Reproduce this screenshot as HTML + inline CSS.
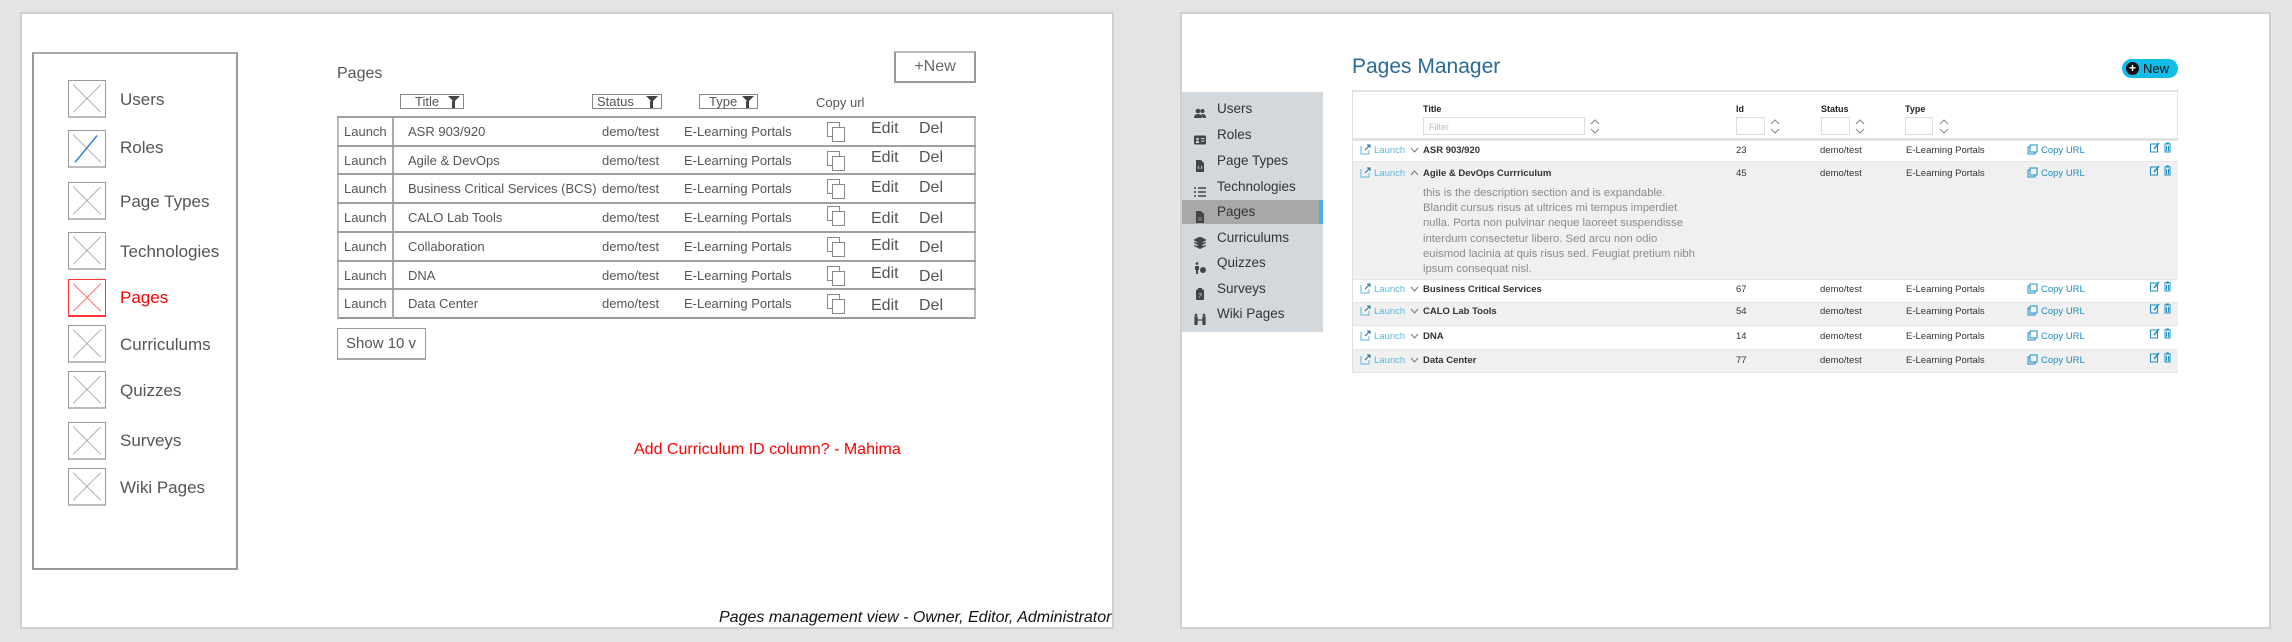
<!DOCTYPE html>
<html><head><meta charset="utf-8"><style>
*{margin:0;padding:0;box-sizing:border-box}
body{width:2292px;height:642px;background:#e4e4e4;position:relative;overflow:hidden;font-family:"Liberation Sans",sans-serif}
.a{position:absolute;white-space:nowrap}
.panel{position:absolute;background:#fff;border:2px solid #cfcfcf}
.xi{position:absolute;width:38px;height:38px;border:1px solid #999;border-bottom:2px solid #bbb}
.xi svg{width:100%;height:100%;display:block}
.lbl{position:absolute;font-size:17px;color:#555;transform:translateY(-50%)}
.lrow{position:absolute;left:337px;width:639px;height:29px;border-top:2px solid #a0a0a0;font-size:13px;color:#555}
.lrow span{position:absolute;top:6px}
.fb{position:absolute;top:94px;height:15px;border:1px solid #888;font-size:13px;color:#555;line-height:13px}
.rs{position:absolute;left:1182px;width:141px;height:26px;font-size:13.5px;color:#333;line-height:26px}
.rs i{position:absolute;left:12px;top:7px;width:12px;height:12px}
.rs b{position:absolute;left:35px;font-weight:normal}
.rr{position:absolute;left:1353px;width:825px;font-size:10px;color:#333;border-top:1px solid #e6e6e6}
.rr span{position:absolute}
.ln{color:#5ab7dc;left:21px}
.cu{color:#1d8cc0;left:688px}
</style></head><body>
<!-- LEFT PANEL -->
<div class="panel" style="left:20px;top:12px;width:1094px;height:617px"></div>
<div class="a" style="left:32px;top:52px;width:206px;height:518px;border:2px solid #999;border-top-color:#aaa"></div>

<div class="xi" style="left:68px;top:80px"><svg viewBox="0 0 38 38"><path d="M4 4L34 34M34 4L4 34" stroke="#aaa" stroke-width="1"/></svg></div>
<div class="xi" style="left:68px;top:130px"><svg viewBox="0 0 38 38"><path d="M4 4L34 34" stroke="#aaa"/><path d="M30 5L6 34" stroke="#2a72d8" stroke-width="1.5"/></svg></div>
<div class="xi" style="left:68px;top:182px"><svg viewBox="0 0 38 38"><path d="M4 4L34 34M34 4L4 34" stroke="#aaa"/></svg></div>
<div class="xi" style="left:68px;top:232px"><svg viewBox="0 0 38 38"><path d="M4 4L34 34M34 4L4 34" stroke="#aaa"/></svg></div>
<div class="xi" style="left:68px;top:279px;border-color:#f33"><svg viewBox="0 0 38 38"><path d="M4 4L34 34M34 4L4 34" stroke="#f66"/></svg></div>
<div class="xi" style="left:68px;top:325px"><svg viewBox="0 0 38 38"><path d="M4 4L34 34M34 4L4 34" stroke="#aaa"/></svg></div>
<div class="xi" style="left:68px;top:371px"><svg viewBox="0 0 38 38"><path d="M4 4L34 34M34 4L4 34" stroke="#aaa"/></svg></div>
<div class="xi" style="left:68px;top:422px"><svg viewBox="0 0 38 38"><path d="M4 4L34 34M34 4L4 34" stroke="#aaa"/></svg></div>
<div class="xi" style="left:68px;top:468px"><svg viewBox="0 0 38 38"><path d="M4 4L34 34M34 4L4 34" stroke="#aaa"/></svg></div>

<div class="lbl" style="left:120px;top:100px">Users</div>
<div class="lbl" style="left:120px;top:148px">Roles</div>
<div class="lbl" style="left:120px;top:202px">Page Types</div>
<div class="lbl" style="left:120px;top:252px">Technologies</div>
<div class="lbl" style="left:120px;top:298px;color:#f00">Pages</div>
<div class="lbl" style="left:120px;top:345px">Curriculums</div>
<div class="lbl" style="left:120px;top:391px">Quizzes</div>
<div class="lbl" style="left:120px;top:441px">Surveys</div>
<div class="lbl" style="left:120px;top:488px">Wiki Pages</div>

<div class="a" style="left:337px;top:65px;font-size:16px;color:#555">Pages</div>
<div class="a" style="left:894px;top:51px;width:82px;height:32px;border:2px solid #999;border-top-color:#bbb;font-size:16px;color:#666;text-align:center;line-height:28px">+New</div>

<div class="fb" style="left:400px;width:64px;padding-left:14px">Title<span style="position:absolute;right:3px;top:1px;width:0;height:0;border-left:6px solid transparent;border-right:6px solid transparent;border-top:6px solid #444"></span><span style="position:absolute;right:8px;top:6px;width:3px;height:7px;background:#444"></span></div>
<div class="fb" style="left:592px;width:70px;padding-left:4px">Status<span style="position:absolute;right:3px;top:1px;border-left:6px solid transparent;border-right:6px solid transparent;border-top:6px solid #444"></span><span style="position:absolute;right:8px;top:6px;width:3px;height:7px;background:#444"></span></div>
<div class="fb" style="left:699px;width:59px;padding-left:9px">Type<span style="position:absolute;right:3px;top:1px;border-left:6px solid transparent;border-right:6px solid transparent;border-top:6px solid #444"></span><span style="position:absolute;right:8px;top:6px;width:3px;height:7px;background:#444"></span></div>
<div class="a" style="left:816px;top:95px;font-size:13px;color:#555">Copy url</div>

<div class="a" style="left:337px;top:116px;width:639px;height:203px;border-left:2px solid #bbb;border-right:2px solid #bbb;border-bottom:2px solid #999"></div>
<div class="a" style="left:392px;top:116px;width:2px;height:203px;background:#aaa"></div>

<div class="lrow" style="top:116px"><span style="left:7px">Launch</span><span style="left:71px">ASR 903/920</span><span style="left:265px">demo/test</span><span style="left:347px">E-Learning Portals</span><span style="left:490px;top:4px;width:13px;height:15px;border:1px solid #888"></span><span style="left:495px;top:9px;width:13px;height:15px;border:1px solid #888;background:#fff"></span><span style="left:534px;top:2px;font-size:16px">Edit</span><span style="left:582px;top:2px;font-size:16px">Del</span></div>
<div class="lrow" style="top:145px"><span style="left:7px">Launch</span><span style="left:71px">Agile &amp; DevOps</span><span style="left:265px">demo/test</span><span style="left:347px">E-Learning Portals</span><span style="left:490px;top:4px;width:13px;height:15px;border:1px solid #888"></span><span style="left:495px;top:9px;width:13px;height:15px;border:1px solid #888;background:#fff"></span><span style="left:534px;top:2px;font-size:16px">Edit</span><span style="left:582px;top:2px;font-size:16px">Del</span></div>
<div class="lrow" style="top:173px"><span style="left:7px">Launch</span><span style="left:71px">Business Critical Services (BCS)</span><span style="left:265px">demo/test</span><span style="left:347px">E-Learning Portals</span><span style="left:490px;top:4px;width:13px;height:15px;border:1px solid #888"></span><span style="left:495px;top:9px;width:13px;height:15px;border:1px solid #888;background:#fff"></span><span style="left:534px;top:4px;font-size:16px">Edit</span><span style="left:582px;top:4px;font-size:16px">Del</span></div>
<div class="lrow" style="top:202px"><span style="left:7px">Launch</span><span style="left:71px">CALO Lab Tools</span><span style="left:265px">demo/test</span><span style="left:347px">E-Learning Portals</span><span style="left:490px;top:2px;width:13px;height:15px;border:1px solid #888"></span><span style="left:495px;top:7px;width:13px;height:15px;border:1px solid #888;background:#fff"></span><span style="left:534px;top:6px;font-size:16px">Edit</span><span style="left:582px;top:6px;font-size:16px">Del</span></div>
<div class="lrow" style="top:231px"><span style="left:7px">Launch</span><span style="left:71px">Collaboration</span><span style="left:265px">demo/test</span><span style="left:347px">E-Learning Portals</span><span style="left:490px;top:4px;width:13px;height:15px;border:1px solid #888"></span><span style="left:495px;top:9px;width:13px;height:15px;border:1px solid #888;background:#fff"></span><span style="left:534px;top:4px;font-size:16px">Edit</span><span style="left:582px;top:6px;font-size:16px">Del</span></div>
<div class="lrow" style="top:260px"><span style="left:7px">Launch</span><span style="left:71px">DNA</span><span style="left:265px">demo/test</span><span style="left:347px">E-Learning Portals</span><span style="left:490px;top:4px;width:13px;height:15px;border:1px solid #888"></span><span style="left:495px;top:9px;width:13px;height:15px;border:1px solid #888;background:#fff"></span><span style="left:534px;top:3px;font-size:16px">Edit</span><span style="left:582px;top:6px;font-size:16px">Del</span></div>
<div class="lrow" style="top:288px"><span style="left:7px">Launch</span><span style="left:71px">Data Center</span><span style="left:265px">demo/test</span><span style="left:347px">E-Learning Portals</span><span style="left:490px;top:4px;width:13px;height:15px;border:1px solid #888"></span><span style="left:495px;top:9px;width:13px;height:15px;border:1px solid #888;background:#fff"></span><span style="left:534px;top:7px;font-size:16px">Edit</span><span style="left:582px;top:7px;font-size:16px">Del</span></div>

<div class="a" style="left:337px;top:328px;width:89px;height:32px;border:1px solid #999;border-bottom:2px solid #aaa;font-size:15px;color:#555;line-height:30px;padding-left:8px">Show 10 v</div>
<div class="a" style="left:634px;top:441px;font-size:16px;color:#f00">Add Curriculum ID column? - Mahima</div>
<div class="a" style="left:719px;top:609px;font-size:16px;font-style:italic;color:#111">Pages management view - Owner, Editor, Administrator</div>

<!-- RIGHT PANEL -->
<div class="panel" style="left:1180px;top:12px;width:1091px;height:617px"></div>
<div class="a" style="left:1352px;top:55px;font-size:21px;color:#2a6a94">Pages Manager</div>
<div class="a" style="left:2122px;top:59px;width:56px;height:19px;border-radius:10px;background:#0fbde8"><span class="a" style="left:4px;top:3px;width:13px;height:13px;border-radius:50%;background:#111;color:#fff;font-size:12px;line-height:12px;text-align:center;font-weight:bold">+</span><span class="a" style="left:21px;top:2px;font-size:13px;color:#111">New</span></div>

<div class="a" style="left:1182px;top:92px;width:141px;height:240px;background:#d3d8dc"></div>
<div class="a" style="left:1182px;top:200px;width:141px;height:24px;background:#a6a8aa"></div>
<div class="a" style="left:1319px;top:200px;width:4px;height:24px;background:#4ab0df"></div>
<div class="rs" style="top:96px"><i><svg viewBox="0 0 12 12" width="12" height="12"><circle cx="4" cy="3" r="2.3" fill="#444"/><circle cx="8.5" cy="3" r="2" fill="#444"/><path d="M0 10Q0 6 4 6Q8 6 8 10ZM7 6.5Q12 5 12 10H9Z" fill="#444"/></svg></i><b>Users</b></div>
<div class="rs" style="top:122px"><i><svg viewBox="0 0 12 12" width="12" height="12"><rect x="0" y="1.5" width="12" height="9" rx="1" fill="#444"/><circle cx="3.5" cy="5" r="1.3" fill="#d3d8dc"/><rect x="2" y="7" width="3" height="2" fill="#d3d8dc"/><rect x="7" y="4" width="3.5" height="1" fill="#d3d8dc"/><rect x="7" y="6.5" width="3.5" height="1" fill="#d3d8dc"/></svg></i><b>Roles</b></div>
<div class="rs" style="top:148px"><i><svg viewBox="0 0 12 12" width="12" height="12"><path d="M2 0H7L10 3V12H2Z" fill="#444"/><path d="M5 6L4 7.5L5 9M7 6L8 7.5L7 9" stroke="#d3d8dc" fill="none" stroke-width=".8"/></svg></i><b>Page Types</b></div>
<div class="rs" style="top:174px"><i><svg viewBox="0 0 12 12" width="12" height="12"><path d="M0 2h2M4 2h8M0 6h2M4 6h8M0 10h2M4 10h8" stroke="#444" stroke-width="1.4"/></svg></i><b>Technologies</b></div>
<div class="rs" style="top:199px"><i><svg viewBox="0 0 12 12" width="12" height="12"><path d="M2 0H7L10 3V12H2Z" fill="#444"/><path d="M4 7h4M4 9h4" stroke="#a6a8aa" stroke-width=".8"/></svg></i><b>Pages</b></div>
<div class="rs" style="top:225px"><i><svg viewBox="0 0 12 12" width="12" height="12"><path d="M6 0L12 3L6 6L0 3Z M0 5.5L6 8.5L12 5.5 M0 8.5L6 11.5L12 8.5" fill="#444" stroke="#444" stroke-width="1"/></svg></i><b>Curriculums</b></div>
<div class="rs" style="top:250px"><i><svg viewBox="0 0 12 12" width="12" height="12"><circle cx="3" cy="1.5" r="1.4" fill="#444"/><path d="M1 4h4v4H4v4H2V8H1Z" fill="#444"/><circle cx="9" cy="8" r="3" fill="#444"/></svg></i><b>Quizzes</b></div>
<div class="rs" style="top:276px"><i><svg viewBox="0 0 12 12" width="12" height="12"><rect x="2" y="1.5" width="8" height="10.5" rx="1" fill="#444"/><rect x="4" y="0" width="4" height="2.5" fill="#444"/><text x="6" y="10" font-size="7" text-anchor="middle" fill="#d3d8dc" font-family="Liberation Sans">?</text></svg></i><b>Surveys</b></div>
<div class="rs" style="top:301px"><i><svg viewBox="0 0 12 12" width="12" height="12"><circle cx="2" cy="2" r="1.3" fill="#444"/><circle cx="10" cy="2" r="1.3" fill="#444"/><path d="M1 4h2v8H1ZM9 4h2v8H9ZM3 7h6" stroke="#444" stroke-width="1.2" fill="#444"/></svg></i><b>Wiki Pages</b></div>

<div class="a" style="left:1352px;top:90px;width:826px;height:283px;border:1px solid #dfe2e4;border-top-width:2px;border-bottom-width:2px"></div>
<div class="a" style="left:1423px;top:104px;font-size:9px;font-weight:bold;color:#222">Title</div>
<div class="a" style="left:1423px;top:117px;width:162px;height:18px;border:1px solid #ddd;font-size:9px;color:#bbb;padding:4px 5px">Filter</div>
<div class="a" style="left:1736px;top:104px;font-size:9px;font-weight:bold;color:#222">Id</div>
<div class="a" style="left:1736px;top:117px;width:29px;height:18px;border:1px solid #ddd"></div>
<div class="a" style="left:1821px;top:104px;font-size:9px;font-weight:bold;color:#222">Status</div>
<div class="a" style="left:1821px;top:117px;width:29px;height:18px;border:1px solid #ddd"></div>
<div class="a" style="left:1905px;top:104px;font-size:9px;font-weight:bold;color:#222">Type</div>
<div class="a" style="left:1905px;top:117px;width:28px;height:18px;border:1px solid #ddd"></div>
<svg class="a" style="left:1590px;top:119px" width="10" height="15"><path d="M1 5L5 1L9 5M1 10L5 14L9 10" stroke="#888" fill="none"/></svg>
<svg class="a" style="left:1770px;top:119px" width="10" height="15"><path d="M1 5L5 1L9 5M1 10L5 14L9 10" stroke="#888" fill="none"/></svg>
<svg class="a" style="left:1855px;top:119px" width="10" height="15"><path d="M1 5L5 1L9 5M1 10L5 14L9 10" stroke="#888" fill="none"/></svg>
<svg class="a" style="left:1939px;top:119px" width="10" height="15"><path d="M1 5L5 1L9 5M1 10L5 14L9 10" stroke="#888" fill="none"/></svg>
<div class="a" style="left:1353px;top:138px;width:825px;height:2px;background:#dfe2e4"></div>

<!-- rows -->
<div class="rr" style="top:140px;height:21px;background:#fff"></div>
<div class="rr" style="top:161px;height:118px;background:#f0f0f0"></div>
<div class="rr" style="top:279px;height:23px;background:#fff"></div>
<div class="rr" style="top:302px;height:23px;background:#f0f0f0"></div>
<div class="rr" style="top:325px;height:24px;background:#fff"></div>
<div class="rr" style="top:349px;height:23px;background:#f0f0f0"></div>

<div class="a" style="left:1353px;top:145px;width:825px;font-size:9.5px;color:#333">
<svg class="a" style="left:7px;top:-1px" width="11" height="11"><path d="M1 2v8h8V6" stroke="#5ab7dc" fill="none"/><path d="M5 6L10 1M7 1h3v3" stroke="#1d6fa0" fill="none"/></svg>
<span class="a ln" style="top:0">Launch</span><svg class="a" style="left:57px;top:2px" width="9" height="6"><path d="M1 1L4.5 5L8 1" stroke="#777" fill="none"/></svg>
<span class="a" style="left:70px;font-weight:bold">ASR 903/920</span><span class="a" style="left:383px">23</span><span class="a" style="left:467px">demo/test</span><span class="a" style="left:553px">E-Learning Portals</span>
<svg class="a" style="left:674px;top:-1px" width="11" height="11"><rect x="1" y="3" width="7" height="7" fill="none" stroke="#1d8cc0"/><rect x="3" y="1" width="7" height="7" fill="#fff" stroke="#1d8cc0"/></svg><span class="a cu" style="top:0">Copy URL</span>
<svg class="a" style="left:797px;top:-3px" width="22" height="11"><rect x="0.5" y="2" width="7" height="8" fill="none" stroke="#1d8cc0"/><path d="M4 7L9 1" stroke="#1d8cc0" stroke-width="1.5"/><path d="M14 2h7M15 3v7h5V3M16.5 4v5M18.5 4v5M16 1h3" stroke="#1d8cc0" fill="none"/></svg>
</div>

<div class="a" style="left:1353px;top:168px;width:825px;font-size:9.5px;color:#333">
<svg class="a" style="left:7px;top:-1px" width="11" height="11"><path d="M1 2v8h8V6" stroke="#5ab7dc" fill="none"/><path d="M5 6L10 1M7 1h3v3" stroke="#1d6fa0" fill="none"/></svg>
<span class="a ln" style="top:0">Launch</span><svg class="a" style="left:57px;top:2px" width="9" height="6"><path d="M1 5L4.5 1L8 5" stroke="#777" fill="none"/></svg>
<span class="a" style="left:70px;font-weight:bold">Agile &amp; DevOps Currriculum</span><span class="a" style="left:383px">45</span><span class="a" style="left:467px">demo/test</span><span class="a" style="left:553px">E-Learning Portals</span>
<svg class="a" style="left:674px;top:-1px" width="11" height="11"><rect x="1" y="3" width="7" height="7" fill="none" stroke="#1d8cc0"/><rect x="3" y="1" width="7" height="7" fill="#f0f0f0" stroke="#1d8cc0"/></svg><span class="a cu" style="top:0">Copy URL</span>
<svg class="a" style="left:797px;top:-3px" width="22" height="11"><rect x="0.5" y="2" width="7" height="8" fill="none" stroke="#1d8cc0"/><path d="M4 7L9 1" stroke="#1d8cc0" stroke-width="1.5"/><path d="M14 2h7M15 3v7h5V3M16.5 4v5M18.5 4v5M16 1h3" stroke="#1d8cc0" fill="none"/></svg>
<div class="a" style="left:70px;top:18px;font-size:11.3px;line-height:15.2px;color:#8a8a8a;white-space:normal;width:290px">this is the description section and is expandable.<br>Blandit cursus risus at ultrices mi tempus imperdiet<br>nulla. Porta non pulvinar neque laoreet suspendisse<br>interdum consectetur libero. Sed arcu non odio<br>euismod lacinia at quis risus sed. Feugiat pretium nibh<br>ipsum consequat nisl.</div>
</div>

<div class="a" style="left:1353px;top:284px;width:825px;font-size:9.5px;color:#333">
<svg class="a" style="left:7px;top:-1px" width="11" height="11"><path d="M1 2v8h8V6" stroke="#5ab7dc" fill="none"/><path d="M5 6L10 1M7 1h3v3" stroke="#1d6fa0" fill="none"/></svg>
<span class="a ln">Launch</span><svg class="a" style="left:57px;top:2px" width="9" height="6"><path d="M1 1L4.5 5L8 1" stroke="#777" fill="none"/></svg>
<span class="a" style="left:70px;font-weight:bold">Business Critical Services</span><span class="a" style="left:383px">67</span><span class="a" style="left:467px">demo/test</span><span class="a" style="left:553px">E-Learning Portals</span>
<svg class="a" style="left:674px;top:-1px" width="11" height="11"><rect x="1" y="3" width="7" height="7" fill="none" stroke="#1d8cc0"/><rect x="3" y="1" width="7" height="7" fill="#fff" stroke="#1d8cc0"/></svg><span class="a cu">Copy URL</span>
<svg class="a" style="left:797px;top:-3px" width="22" height="11"><rect x="0.5" y="2" width="7" height="8" fill="none" stroke="#1d8cc0"/><path d="M4 7L9 1" stroke="#1d8cc0" stroke-width="1.5"/><path d="M14 2h7M15 3v7h5V3M16.5 4v5M18.5 4v5M16 1h3" stroke="#1d8cc0" fill="none"/></svg>
</div>

<div class="a" style="left:1353px;top:306px;width:825px;font-size:9.5px;color:#333">
<svg class="a" style="left:7px;top:-1px" width="11" height="11"><path d="M1 2v8h8V6" stroke="#5ab7dc" fill="none"/><path d="M5 6L10 1M7 1h3v3" stroke="#1d6fa0" fill="none"/></svg>
<span class="a ln">Launch</span><svg class="a" style="left:57px;top:2px" width="9" height="6"><path d="M1 1L4.5 5L8 1" stroke="#777" fill="none"/></svg>
<span class="a" style="left:70px;font-weight:bold">CALO Lab Tools</span><span class="a" style="left:383px">54</span><span class="a" style="left:467px">demo/test</span><span class="a" style="left:553px">E-Learning Portals</span>
<svg class="a" style="left:674px;top:-1px" width="11" height="11"><rect x="1" y="3" width="7" height="7" fill="none" stroke="#1d8cc0"/><rect x="3" y="1" width="7" height="7" fill="#f0f0f0" stroke="#1d8cc0"/></svg><span class="a cu">Copy URL</span>
<svg class="a" style="left:797px;top:-3px" width="22" height="11"><rect x="0.5" y="2" width="7" height="8" fill="none" stroke="#1d8cc0"/><path d="M4 7L9 1" stroke="#1d8cc0" stroke-width="1.5"/><path d="M14 2h7M15 3v7h5V3M16.5 4v5M18.5 4v5M16 1h3" stroke="#1d8cc0" fill="none"/></svg>
</div>

<div class="a" style="left:1353px;top:331px;width:825px;font-size:9.5px;color:#333">
<svg class="a" style="left:7px;top:-1px" width="11" height="11"><path d="M1 2v8h8V6" stroke="#5ab7dc" fill="none"/><path d="M5 6L10 1M7 1h3v3" stroke="#1d6fa0" fill="none"/></svg>
<span class="a ln">Launch</span><svg class="a" style="left:57px;top:2px" width="9" height="6"><path d="M1 1L4.5 5L8 1" stroke="#777" fill="none"/></svg>
<span class="a" style="left:70px;font-weight:bold">DNA</span><span class="a" style="left:383px">14</span><span class="a" style="left:467px">demo/test</span><span class="a" style="left:553px">E-Learning Portals</span>
<svg class="a" style="left:674px;top:-1px" width="11" height="11"><rect x="1" y="3" width="7" height="7" fill="none" stroke="#1d8cc0"/><rect x="3" y="1" width="7" height="7" fill="#fff" stroke="#1d8cc0"/></svg><span class="a cu">Copy URL</span>
<svg class="a" style="left:797px;top:-3px" width="22" height="11"><rect x="0.5" y="2" width="7" height="8" fill="none" stroke="#1d8cc0"/><path d="M4 7L9 1" stroke="#1d8cc0" stroke-width="1.5"/><path d="M14 2h7M15 3v7h5V3M16.5 4v5M18.5 4v5M16 1h3" stroke="#1d8cc0" fill="none"/></svg>
</div>

<div class="a" style="left:1353px;top:355px;width:825px;font-size:9.5px;color:#333">
<svg class="a" style="left:7px;top:-1px" width="11" height="11"><path d="M1 2v8h8V6" stroke="#5ab7dc" fill="none"/><path d="M5 6L10 1M7 1h3v3" stroke="#1d6fa0" fill="none"/></svg>
<span class="a ln">Launch</span><svg class="a" style="left:57px;top:2px" width="9" height="6"><path d="M1 1L4.5 5L8 1" stroke="#777" fill="none"/></svg>
<span class="a" style="left:70px;font-weight:bold">Data Center</span><span class="a" style="left:383px">77</span><span class="a" style="left:467px">demo/test</span><span class="a" style="left:553px">E-Learning Portals</span>
<svg class="a" style="left:674px;top:-1px" width="11" height="11"><rect x="1" y="3" width="7" height="7" fill="none" stroke="#1d8cc0"/><rect x="3" y="1" width="7" height="7" fill="#f0f0f0" stroke="#1d8cc0"/></svg><span class="a cu">Copy URL</span>
<svg class="a" style="left:797px;top:-3px" width="22" height="11"><rect x="0.5" y="2" width="7" height="8" fill="none" stroke="#1d8cc0"/><path d="M4 7L9 1" stroke="#1d8cc0" stroke-width="1.5"/><path d="M14 2h7M15 3v7h5V3M16.5 4v5M18.5 4v5M16 1h3" stroke="#1d8cc0" fill="none"/></svg>
</div>
</body></html>
